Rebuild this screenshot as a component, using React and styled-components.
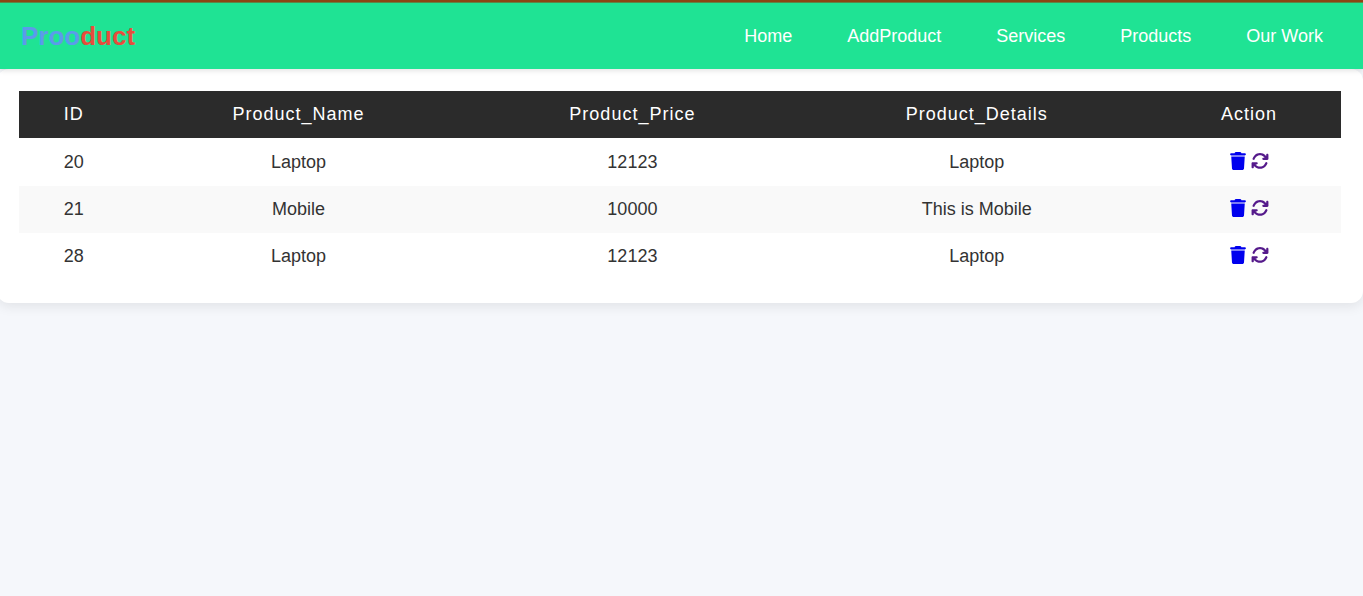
import React from 'react';
import styled, { createGlobalStyle } from 'styled-components';
import { FaTrash, FaArrowsRotate } from 'react-icons/fa6';

const GlobalStyle = createGlobalStyle`
  * { box-sizing: border-box; }
  body {
    margin: 0;
    color: #333;
    font-family: "Liberation Sans", Arial, sans-serif;
    font-size: 18px;
    line-height: 23px;
  }
`;

const Page = styled.div`
  min-height: 100vh;
  background: #f5f7fb;
`;

const Header = styled.header`
  position: relative;
  display: flex;
  align-items: center;
  justify-content: space-between;
  padding: 17px 40px 16px 21px;
  border-top: 2px solid #8b4513;
  background: #1fe394;
  box-shadow: inset 0 1px 0 rgba(139, 69, 19, 0.6), 0 2px 5px rgba(0, 0, 0, 0.1);
`;

const Logo = styled.a`
  color: #5b9bea;
  font-size: 26px;
  font-weight: bold;
  line-height: 34px;
  text-decoration: none;
`;

const LogoAccent = styled.span`
  color: #e74c3c;
`;

const Nav = styled.nav`
  display: flex;
  gap: 55px;
`;

const NavLink = styled.a`
  color: #fff;
  text-decoration: none;
`;

const Card = styled.main`
  margin-left: -3px;
  padding: 22px 22px 23px;
  border-radius: 12px;
  background: #fff;
  box-shadow: 0 4px 12px rgba(0, 0, 0, 0.08);
`;

const Table = styled.table`
  width: 100%;
  border-collapse: separate;
  border-spacing: 0;
  table-layout: fixed;
  text-align: center;
`;

const HeadCell = styled.th`
  width: ${({ $width }) => $width};
  padding: 12px 0;
  border-bottom: 1px solid #fff;
  background: #2b2b2b;
  color: #fff;
  font-weight: normal;
  letter-spacing: 1px;
`;

const Row = styled.tr`
  &:nth-child(even) { background: #f9f9f9; }
`;

const Cell = styled.td`
  padding: 12px 0;
`;

const Actions = styled.div`
  display: flex;
  align-items: center;
  justify-content: center;
  gap: 4px;
  padding-bottom: 3px;
`;

const ActionLink = styled.a`
  display: flex;
  color: ${({ $color }) => $color};
`;

const links = ['Home', 'AddProduct', 'Services', 'Products', 'Our Work'];

const columns = [
  { label: 'ID', width: '8.3%' },
  { label: 'Product_Name', width: '25.7%' },
  { label: 'Product_Price', width: '24.8%' },
  { label: 'Product_Details', width: '27.3%' },
  { label: 'Action', width: '13.9%' },
];

const products = [
  { id: 20, name: 'Laptop', price: 12123, details: 'Laptop' },
  { id: 21, name: 'Mobile', price: 10000, details: 'This is Mobile' },
  { id: 28, name: 'Laptop', price: 12123, details: 'Laptop' },
];

export default function App() {
  return (
    <Page>
      <GlobalStyle />
      <Header>
        <Logo href="#">Proo<LogoAccent>duct</LogoAccent></Logo>
        <Nav>
          {links.map((link) => (
            <NavLink key={link} href="#">{link}</NavLink>
          ))}
        </Nav>
      </Header>
      <Card>
        <Table>
          <thead>
            <tr>
              {columns.map(({ label, width }) => (
                <HeadCell key={label} scope="col" $width={width}>{label}</HeadCell>
              ))}
            </tr>
          </thead>
          <tbody>
            {products.map(({ id, name, price, details }) => (
              <Row key={id}>
                <Cell>{id}</Cell>
                <Cell>{name}</Cell>
                <Cell>{price}</Cell>
                <Cell>{details}</Cell>
                <Cell>
                  <Actions>
                    <ActionLink href="#" $color="#0000ee" aria-label={`Delete product ${id}`}>
                      <FaTrash />
                    </ActionLink>
                    <ActionLink href="#" $color="#551a8b" aria-label={`Update product ${id}`}>
                      <FaArrowsRotate />
                    </ActionLink>
                  </Actions>
                </Cell>
              </Row>
            ))}
          </tbody>
        </Table>
      </Card>
    </Page>
  );
}
